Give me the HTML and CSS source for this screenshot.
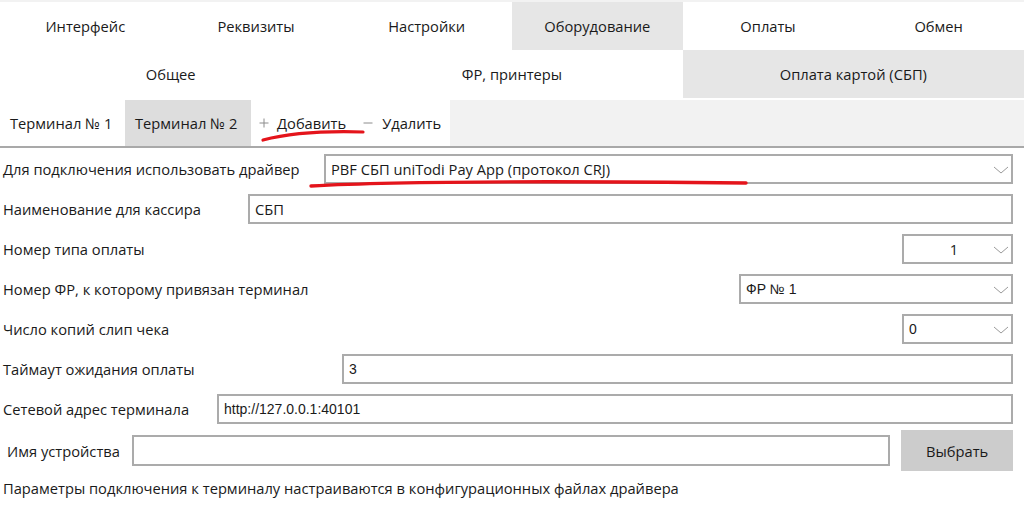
FILE: index.html
```html
<!DOCTYPE html>
<html lang="ru">
<head>
<meta charset="utf-8">
<link rel="stylesheet" href="styles.css">
</head>
<body>
<div class="page">
  <div class="tabs tabs6">
    <div class="tab">Интерфейс</div>
    <div class="tab">Реквизиты</div>
    <div class="tab">Настройки</div>
    <div class="tab sel">Оборудование</div>
    <div class="tab">Оплаты</div>
    <div class="tab">Обмен</div>
  </div>
  <div class="tabs tabs3">
    <div class="tab">Общее</div>
    <div class="tab">ФР, принтеры</div>
    <div class="tab sel">Оплата картой (СБП)</div>
  </div>
  <div class="terms">
    <div class="term">Терминал № 1</div>
    <div class="term sel">Терминал № 2</div>
    <div class="act"><svg class="sign" width="10" height="10" viewBox="0 0 10 10"><path d="M5 0.5 V9.5 M0.5 5 H9.5" stroke="#8c8c8c" stroke-width="1"/></svg>Добавить<svg class="sign minus" width="10" height="10" viewBox="0 0 10 10"><path d="M0.5 5 H9.5" stroke="#8c8c8c" stroke-width="1"/></svg>Удалить</div>
    <div class="fill"></div>
  </div>
  <div class="form">
    <div class="row">
      <span class="label">Для подключения использовать драйвер</span>
      <div class="box select w-driver"><span class="val">PBF СБП uniTodi Pay App (протокол CRJ)</span><svg class="chev" width="16" height="8" viewBox="0 0 16 8"><path d="M1 1 L8 7 L15 1" fill="none" stroke="#9a9a9a" stroke-width="1"/></svg></div>
    </div>
    <div class="row">
      <span class="label">Наименование для кассира</span>
      <div class="box w-name"><span class="val">СБП</span></div>
    </div>
    <div class="row">
      <span class="label">Номер типа оплаты</span>
      <div class="box select w-small"><span class="val center">1</span><svg class="chev" width="16" height="8" viewBox="0 0 16 8"><path d="M1 1 L8 7 L15 1" fill="none" stroke="#9a9a9a" stroke-width="1"/></svg></div>
    </div>
    <div class="row">
      <span class="label">Номер ФР, к которому привязан терминал</span>
      <div class="box select w-fr"><span class="val arial">ФР № 1</span><svg class="chev" width="16" height="8" viewBox="0 0 16 8"><path d="M1 1 L8 7 L15 1" fill="none" stroke="#9a9a9a" stroke-width="1"/></svg></div>
    </div>
    <div class="row">
      <span class="label">Число копий слип чека</span>
      <div class="box select w-small"><span class="val arial">0</span><svg class="chev" width="16" height="8" viewBox="0 0 16 8"><path d="M1 1 L8 7 L15 1" fill="none" stroke="#9a9a9a" stroke-width="1"/></svg></div>
    </div>
    <div class="row">
      <span class="label">Таймаут ожидания оплаты</span>
      <div class="box w-timeout"><span class="val arial">3</span></div>
    </div>
    <div class="row">
      <span class="label">Сетевой адрес терминала</span>
      <div class="box w-addr"><span class="val arial">http://127.0.0.1:40101</span></div>
    </div>
    <div class="row dev">
      <span class="label">Имя устройства</span>
      <div class="box w-dev"></div>
      <div class="btn">Выбрать</div>
    </div>
    <div class="note">Параметры подключения к терминалу настраиваются в конфигурационных файлах драйвера</div>
  </div>
  <svg class="marks" width="1024" height="506" viewBox="0 0 1024 506">
    <path d="M263 140 C 290 133, 330 131, 363 132" fill="none" stroke="#e4141b" stroke-width="3.2" stroke-linecap="round"/>
    <path d="M311 186 C 400 181, 560 181, 746 183" fill="none" stroke="#e4141b" stroke-width="3.4" stroke-linecap="round"/>
  </svg>
</div>
</body>
</html>
```
FILE: styles.css
```css
* { box-sizing: border-box; }
html, body { margin: 0; padding: 0; background: #fff; }
body {
  font-family: "Open Sans", "Noto Sans", sans-serif;
  font-size: 14.7px;
  color: #1a1a1a;
}
.page { position: relative; width: 1024px; height: 506px; overflow: hidden; }
.tabs { display: grid; }
.tabs6 { grid-template-columns: repeat(6, 1fr); border-top: 2px solid #f2f2f2; height: 50px; }
.tabs3 { grid-template-columns: repeat(3, 1fr); height: 48px; }
.tab { display: flex; align-items: center; justify-content: center; }
.tab.sel { background: #e6e6e6; }
.terms { display: flex; height: 50px; border-bottom: 2px solid #a9a9a9; padding-top: 2px; }
.term { display: flex; align-items: center; padding: 0 10px; width: 125px; }
.term.sel { background: #dddddd; width: 126px; }
.act { display: flex; align-items: center; padding-left: 8px; width: 199px; }
.sign { margin-right: 8px; flex: none; }
.minus { margin-left: 17px; margin-right: 9px; }
.fill { flex: 1; background: #f2f2f2; }
.form { padding: 6px 11px 0 3px; display: flex; flex-direction: column; gap: 10px; }
.row { display: flex; align-items: center; justify-content: space-between; height: 30px; }
.box {
  height: 30px; border: 2px solid #ababab; background: #fff;
  display: flex; align-items: center; position: relative; padding-left: 5px;
}
.select { padding-right: 26px; }
.val { white-space: nowrap; }
.val.center { flex: 1; text-align: center; padding-left: 14px; }
.arial { font-family: "Liberation Sans", Arial, sans-serif; font-size: 14px; }
.chev { position: absolute; right: 2px; top: 10px; }
.w-driver { width: 689px; }
.w-name { width: 765px; }
.w-small { width: 111px; }
.w-fr { width: 274px; }
.w-timeout { width: 671px; }
.w-addr { width: 796px; }
.row.dev { justify-content: flex-start; height: 31px; margin-top: 1px; }
.row.dev .label { padding-left: 4px; width: 129px; }
.w-dev { width: 760px; height: 31px; }
.btn {
  margin-left: 11px; width: 112px; height: 41px; background: #cccccc;
  display: flex; align-items: center; justify-content: center;
}
.note { margin-top: 2px; }
.marks { position: absolute; left: 0; top: 0; pointer-events: none; }
```
